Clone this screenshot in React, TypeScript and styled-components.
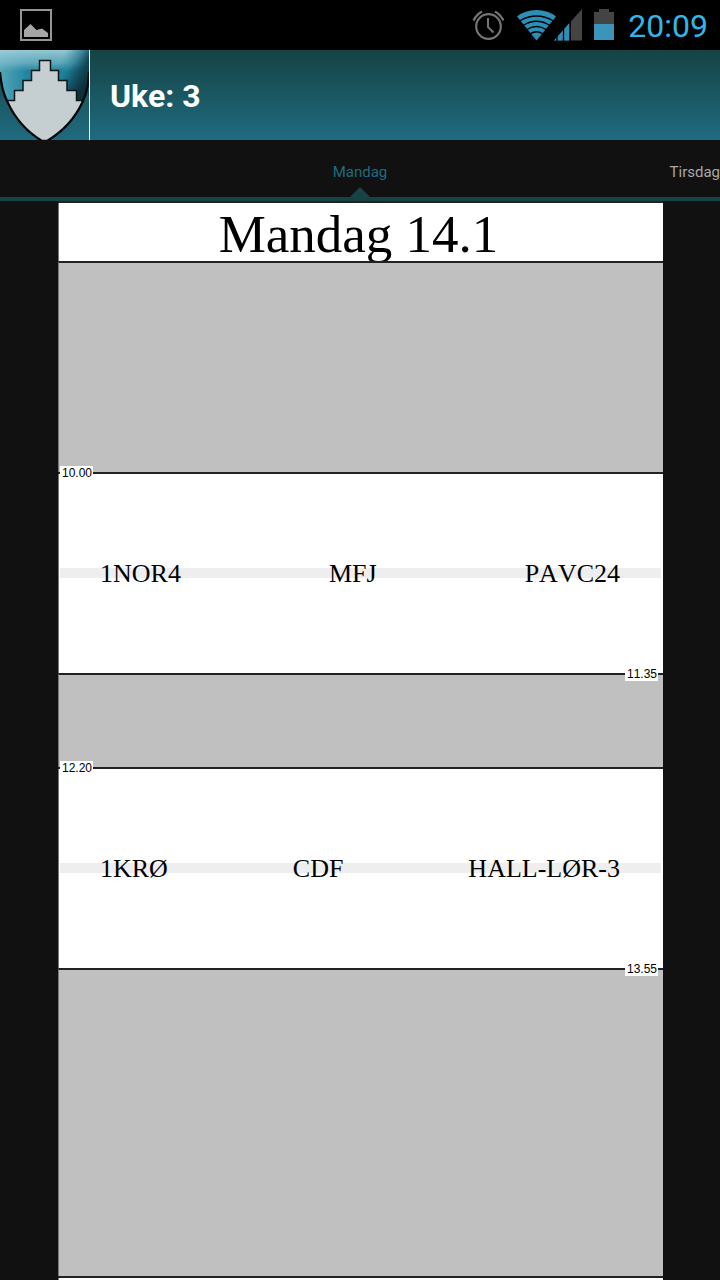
import React from "react";
import styled, { createGlobalStyle } from "styled-components";

const GlobalStyle = createGlobalStyle`
  *, *::before, *::after { box-sizing: border-box; }
  body {
    margin: 0;
    background: #111111;
    font-family: Roboto, "Liberation Sans", sans-serif;
  }
`;

const Screen = styled.div`
  display: flex;
  flex-direction: column;
  min-height: 100vh;
  overflow: hidden;
`;

const StatusBar = styled.div`
  display: flex;
  align-items: center;
  height: 50px;
  padding: 0 12px 0 20px;
  background: #000000;
`;

const StatusIcons = styled.div`
  display: flex;
  align-items: center;
  gap: 12px;
  margin-left: auto;
`;

const Clock = styled.time`
  margin-left: 2px;
  padding-top: 2px;
  color: #33b5e5;
  font-size: 32px;
  line-height: 48px;
`;

const Header = styled.header`
  display: flex;
  align-items: center;
  height: 90px;
  background: linear-gradient(#164344, #1f6b80);
`;

const HomeLink = styled.a`
  display: block;
  width: 90px;
  height: 90px;
  border-right: 1px solid #ffffff;
`;

const Title = styled.h1`
  margin: 0 0 0 20px;
  padding-top: 2px;
  color: #ffffff;
  font-size: 32px;
  line-height: 40px;
  font-weight: 700;
`;

const Tabs = styled.nav`
  display: grid;
  grid-template-columns: 1fr auto 1fr;
  height: 61px;
  border-bottom: 4px solid #164344;
`;

const Tab = styled.button<{ $active?: boolean }>`
  position: relative;
  grid-column: ${(p) => (p.$active ? 2 : 3)};
  justify-self: ${(p) => (p.$active ? "center" : "end")};
  padding: 6px 0 0;
  border: 0;
  background: none;
  color: ${(p) => (p.$active ? "#1f6b80" : "#a8a8a8")};
  font-family: inherit;
  font-size: 15px;
  line-height: 20px;
  cursor: pointer;

  &::after {
    content: "";
    display: ${(p) => (p.$active ? "block" : "none")};
    position: absolute;
    bottom: 0;
    left: 50%;
    margin-left: -10px;
    border: 10px solid transparent;
    border-top: 0;
    border-bottom-color: #164344;
  }
`;

const Schedule = styled.main`
  flex: 1;
  display: flex;
  flex-direction: column;
  margin: 0 57px 0 58px;
  background: #ffffff;
  color: #000000;
  box-shadow: inset 1px 0 #777777;
`;

const DayTitle = styled.h2`
  height: 60px;
  margin: 0;
  padding-right: 4px;
  border-top: 2px solid #222222;
  font-family: "Liberation Serif", serif;
  font-size: 53px;
  line-height: 62px;
  font-weight: 400;
  text-align: center;
`;

const FreeTime = styled.div<{ $height: number }>`
  height: ${(p) => p.$height}px;
  border-top: 2px solid #222222;
  border-left: 1px solid #777777;
  background: #c0c0c0;
`;

const Lesson = styled.section`
  position: relative;
  display: flex;
  align-items: center;
  justify-content: space-between;
  height: 201px;
  padding: 0 43px 0 42px;
  border-top: 2px solid #222222;
  font-family: "Liberation Serif", serif;
  font-size: 26px;
  line-height: 32px;
  font-kerning: none;

  &::before {
    content: "";
    position: absolute;
    left: 2px;
    right: 2px;
    top: 50%;
    height: 10px;
    margin-top: -6px;
    background: #eeeeee;
  }
`;

const Field = styled.span`
  position: relative;
`;

const TimeMark = styled.time<{ $end?: boolean }>`
  position: absolute;
  z-index: 1;
  ${(p) => (p.$end ? "right: 5px; bottom: -8px;" : "left: 2px; top: -8px;")}
  padding: 1px 1px 0 2px;
  background: #ffffff;
  font-family: "Liberation Sans", sans-serif;
  font-size: 12px;
  line-height: 13px;
`;

const NextDay = styled.div`
  flex: 1;
  min-height: 4px;
  border-top: 2px solid #222222;
`;

const GalleryIcon = () => (
  <svg width="32" height="32" viewBox="0 0 32 32" aria-hidden="true">
    <rect x="1" y="1" width="30" height="30" fill="none" stroke="#969696" strokeWidth="2" />
    <path d="M4 28V21L10.500 15L16.500 21L22 19.500L28 24V28Z" fill="#a6a6a6" />
  </svg>
);

const AlarmIcon = () => (
  <svg width="32" height="32" viewBox="0 0 32 32" fill="none" stroke="#747474" aria-hidden="true">
    <circle cx="16.500" cy="17.500" r="12.300" strokeWidth="2.200" />
    <path d="M16 9V18L21.500 23.500" strokeWidth="2" />
    <path d="M1.500 11.500Q4.500 5.500 10 2.500M23 2.500Q28.500 5.500 31.500 11.500" strokeWidth="2.400" />
  </svg>
);

const NetworkIcon = () => (
  <svg width="66" height="32" viewBox="0 0 66 32" aria-hidden="true">
    <path d="M20.500 31.500L1 7.500Q9 1 20.500 1T40 7.500Z" fill="#2c8fb8" />
    <g fill="none" stroke="#000000" strokeWidth="1.300">
      <path d="M3.500 12Q20.500 2 37.500 12" />
      <path d="M7 16.500Q20.500 8 34 16.500" />
      <path d="M10 21Q20.500 14 31 21" />
      <path d="M13 25.500Q20.500 20 28 25.500" />
    </g>
    <path d="M38 31.500L66 0V31.500Z" fill="#444444" />
    <path d="M38 31.500L53 14.500V31.500Z" fill="#318db5" />
    <path d="M47.500 17V32M54.300 12V32M41 27V32" stroke="#000000" strokeWidth="1.300" />
  </svg>
);

const BatteryIcon = () => (
  <svg width="20" height="32" viewBox="0 0 20 32" aria-hidden="true">
    <path d="M0 3H5V0H15V3H20V31H0Z" fill="#444444" />
    <path d="M0 15H20V31H0Z" fill="#3b94b9" />
  </svg>
);

const SHIELD = "M0 0V22C1 34 3 43 7 51C15 69 27 82 41 90H48C62 82 75 69 83 51C87 42 89 33 89 22V0Z";

const CrestLogo = () => (
  <svg width="89" height="90" viewBox="0 0 89 90" aria-hidden="true">
    <defs>
      <linearGradient id="gloss" x1="0" y1="0" x2="1" y2="0">
        <stop offset="0" stopColor="#55a6b9" />
        <stop offset="0.300" stopColor="#2386a0" />
        <stop offset="0.750" stopColor="#1f809a" />
        <stop offset="1" stopColor="#14576a" />
      </linearGradient>
      <linearGradient id="shine" gradientUnits="userSpaceOnUse" x1="0" y1="0" x2="0" y2="21">
        <stop offset="0" stopColor="#a9d3dc" stopOpacity="0.850" />
        <stop offset="0.600" stopColor="#8dc4d0" stopOpacity="0.600" />
        <stop offset="1" stopColor="#8dc4d0" stopOpacity="0" />
      </linearGradient>
      <linearGradient id="shineFade" gradientUnits="userSpaceOnUse" x1="64" y1="4" x2="86" y2="14">
        <stop offset="0" stopColor="#ffffff" />
        <stop offset="1" stopColor="#000000" />
      </linearGradient>
      <mask id="shineMask">
        <rect width="89" height="90" fill="url(#shineFade)" />
      </mask>
      <linearGradient id="shade" gradientUnits="userSpaceOnUse" x1="67" y1="20" x2="88" y2="38">
        <stop offset="0" stopColor="#0b2b36" stopOpacity="0" />
        <stop offset="0.850" stopColor="#0b2b36" stopOpacity="0.900" />
      </linearGradient>
      <clipPath id="shieldClip">
        <path d={SHIELD} />
      </clipPath>
    </defs>
    <g clipPath="url(#shieldClip)">
      <rect width="89" height="90" fill="url(#gloss)" />
      <rect width="89" height="90" fill="url(#shade)" />
      <rect width="89" height="21" fill="url(#shine)" mask="url(#shineMask)" />
      <path
        d="M0 50.500H14.500V40.500H23V30.500H31.500V20.500H39.500V10.500H50.500V20.500H58.500V30.500H67V40.500H76.500V50.500H89V92H0Z"
        fill="#c5cfd2"
        stroke="#0c1619"
        strokeWidth="1.500"
      />
    </g>
    <path d="M0 22C1 34 3 43 7 51C15 69 27 82 42 91H47C62 82 75 69 83 51C87 42 89 33 89 22" fill="none" stroke="#030809" strokeWidth="2.300" />
  </svg>
);

type LessonData = { start: string; end: string; fields: string[] };

const LessonRow = ({ start, end, fields }: LessonData) => (
  <Lesson>
    <TimeMark>{start}</TimeMark>
    {fields.map((field) => (
      <Field key={field}>{field}</Field>
    ))}
    <TimeMark $end>{end}</TimeMark>
  </Lesson>
);

export default function App() {
  return (
    <Screen>
      <GlobalStyle />
      <StatusBar>
        <GalleryIcon />
        <StatusIcons>
          <AlarmIcon />
          <NetworkIcon />
          <BatteryIcon />
          <Clock>20:09</Clock>
        </StatusIcons>
      </StatusBar>
      <Header>
        <HomeLink href="#" aria-label="Hjem">
          <CrestLogo />
        </HomeLink>
        <Title>Uke: 3</Title>
      </Header>
      <Tabs>
        <Tab $active>Mandag</Tab>
        <Tab>Tirsdag</Tab>
      </Tabs>
      <Schedule>
        <DayTitle>Mandag 14.1</DayTitle>
        <FreeTime $height={211} />
        <LessonRow start="10.00" end="11.35" fields={["1NOR4", "MFJ", "PAVC24"]} />
        <FreeTime $height={94} />
        <LessonRow start="12.20" end="13.55" fields={["1KRØ", "CDF", "HALL-LØR-3"]} />
        <FreeTime $height={308} />
        <NextDay />
      </Schedule>
    </Screen>
  );
}
